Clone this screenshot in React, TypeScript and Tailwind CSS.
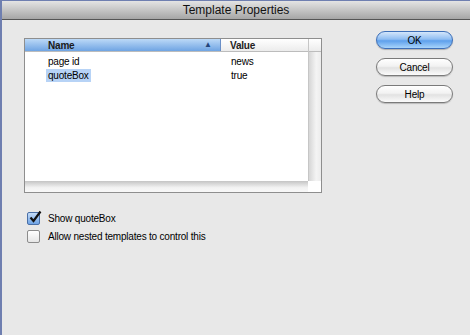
import React from "react";

const font = { fontFamily: '"Liberation Sans", Arial, sans-serif' };

function AquaButton({ label, primary }: { label: string; primary?: boolean }) {
  return (
    <button
      className={
        primary
          ? "w-[77px] h-[18px] rounded-full border border-[#3d6fb8] bg-[linear-gradient(#d3e6fb_0%,#8fbdf2_45%,#5ea0ec_55%,#a8d4fb_100%)] text-[10px] tracking-[-0.2px] text-black shadow-[0_1px_1px_rgba(0,0,0,0.25)] flex items-center justify-center"
          : "w-[77px] h-[18px] rounded-full border border-[#7a7a7a] bg-[linear-gradient(#ffffff_0%,#f2f2f2_45%,#e2e2e2_55%,#fbfbfb_100%)] text-[10px] tracking-[-0.2px] text-black shadow-[0_1px_1px_rgba(0,0,0,0.2)] flex items-center justify-center"
      }
    >
      {label}
    </button>
  );
}

function Checkbox({ checked, label }: { checked?: boolean; label: string }) {
  return (
    <div className="flex items-center h-[18px]">
      <div
        className={
          checked
            ? "relative w-[13px] h-[13px] rounded-[2px] border border-[#4a6fa6] bg-[linear-gradient(#c4dcf8,#6fa4e6)]"
            : "w-[13px] h-[13px] rounded-[2px] border border-[#8c8c8c] bg-[linear-gradient(#ffffff,#e6e6e6)]"
        }
      >
        {checked && (
          <svg viewBox="0 0 14 14" className="absolute left-[0px] top-[-3px] w-[14px] h-[14px]">
            <path d="M2.5 7.5 L5.5 11 L12.5 1.5" fill="none" stroke="#111" strokeWidth="2.2" />
          </svg>
        )}
      </div>
      <span className="ml-[8px] text-[10px] tracking-[-0.2px] text-black">{label}</span>
    </div>
  );
}

export default function App() {
  return (
    <div className="w-[470px] h-[335px] bg-[#6f7fb0] pl-[2px] pt-[1px]" style={font}>
      <div className="w-[468px] h-[334px] bg-[#e8e8e8] flex flex-col">
        <div className="h-[19px] border-b border-[#555] bg-[linear-gradient(#e4e4e4,#a6a6a6)] flex items-center justify-center">
          <span className="text-[12px] text-[#111]">Template Properties</span>
        </div>
        <div className="flex flex-1">
          <div className="pl-[22px] pt-[18px] flex flex-col">
            <div className="w-[298px] h-[155px] border border-[#8e8e8e] bg-white flex flex-col">
              <div className="flex flex-1">
                <div className="flex-1 flex flex-col">
                  <div className="h-[13px] flex border-b border-[#bcbcbc]">
                    <div className="w-[196px] bg-[linear-gradient(#bcd9f7,#6fa4e3)] flex items-center justify-between pl-[23px] pr-[8px] border-r border-[#6a8fc6]">
                      <span className="font-bold text-[#1a1a1a] text-[10px] tracking-[-0.2px]">Name</span>
                      <span className="text-[8px] text-[#24457a]">▲</span>
                    </div>
                    <div className="flex-1 bg-[linear-gradient(#ffffff,#ececec)] flex items-center pl-[9px]">
                      <span className="text-[10px] font-bold text-[#222] tracking-[-0.2px]">Value</span>
                    </div>
                  </div>
                  <div className="flex flex-col pt-[2px] text-[10px] tracking-[-0.2px]">
                    <div className="flex h-[14px] items-center">
                      <div className="w-[196px] pl-[23px]">page id</div>
                      <div className="pl-[10px]">news</div>
                    </div>
                    <div className="flex h-[14px] items-center">
                      <div className="w-[196px] pl-[21px]">
                        <span className="bg-[#b7d3f6] px-[2px] py-[1px]">quoteBox</span>
                      </div>
                      <div className="pl-[10px]">true</div>
                    </div>
                  </div>
                </div>
                <div className="w-[13px] flex flex-col border-l border-[#c6c6c6]">
                  <div className="h-[13px] bg-[linear-gradient(#ffffff,#ececec)] border-b border-[#bcbcbc]" />
                  <div className="flex-1 bg-[linear-gradient(90deg,#d6d6d6,#f4f4f4_60%,#ececec)]" />
                </div>
              </div>
              <div className="h-[11px] flex">
                <div className="flex-1 bg-[linear-gradient(#c4c4c4,#f2f2f2_60%,#f8f8f8)]" />
                <div className="w-[13px] bg-white" />
              </div>
            </div>
            <div className="mt-[16px] flex flex-col pl-[3px]">
              <Checkbox checked label="Show quoteBox" />
              <Checkbox label="Allow nested templates to control this" />
            </div>
          </div>
          <div className="ml-[54px] pt-[11px] flex flex-col gap-[9px]">
            <AquaButton label="OK" primary />
            <AquaButton label="Cancel" />
            <AquaButton label="Help" />
          </div>
        </div>
      </div>
    </div>
  );
}
